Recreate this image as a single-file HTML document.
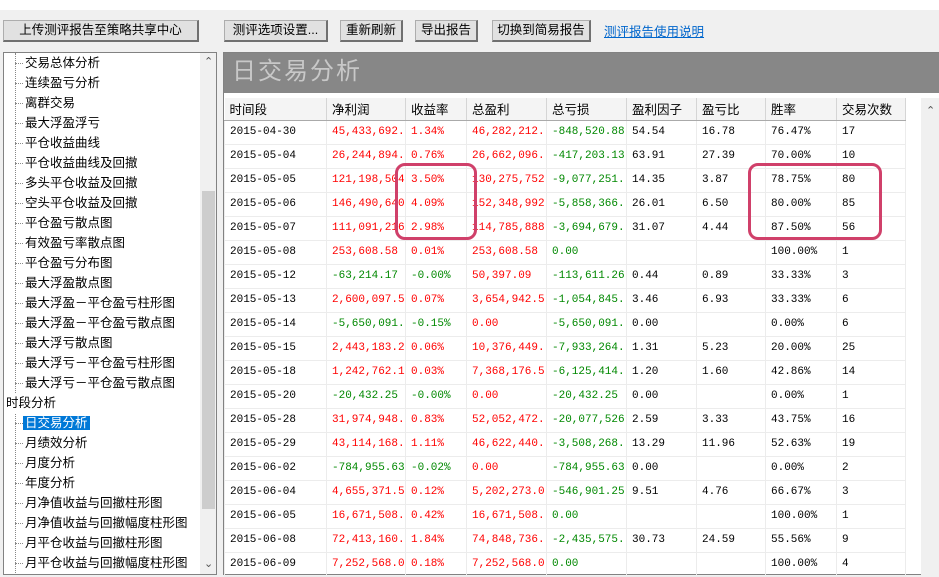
<!DOCTYPE html>
<html><head><meta charset="utf-8"><style>
*{margin:0;padding:0;box-sizing:border-box}
body{width:939px;height:575px;overflow:hidden;background:#f0f0f0;position:relative;font-family:"Liberation Sans","Noto Sans CJK SC",sans-serif;font-size:12px;color:#000}
.top{position:absolute;left:0;top:0;width:939px;height:10px;background:#fff}
.btn{position:absolute;top:20px;height:22px;background:#e1e1e1;border:1px solid #adadad;border-right:2px solid #707070;border-bottom:2px solid #707070;text-align:center;line-height:19px;font-size:12.5px}
.link{position:absolute;left:604px;top:21px;color:#0066cc;text-decoration:underline;font-size:12.5px}
.tree{position:absolute;left:3px;top:52px;width:214px;height:523px;background:#fff;border:1px solid #828282;overflow:hidden}
.ti{position:absolute;left:21px;height:20px;line-height:20px;font-size:12.5px;white-space:nowrap}
.ti:before{content:"";position:absolute;left:-10px;top:10px;width:8px;border-top:1px dotted #888}
.vl{position:absolute;left:11px;top:0;height:520px;border-left:1px dotted #888}
.sb{position:absolute;left:196px;top:0;width:17px;height:521px;background:#f0f0f0}
.thumb{position:absolute;left:198px;top:138px;width:13px;height:318px;background:#cdcdcd}
.sel{background:#0078d7;color:#fff;padding:0 2px;margin-left:-2px}
.right{position:absolute;left:223px;top:52px;width:716px;height:523px;background:#fff;border:1px solid #828282;border-right:none}
.title{position:absolute;left:0;top:0;width:716px;height:40px;background:#878787;color:#c8c8c8;font-size:24px;line-height:38px;padding-left:8px;letter-spacing:2px}
table{position:absolute;left:0;top:45px;width:681px;border-collapse:collapse;table-layout:fixed;font-family:"Liberation Mono","Noto Sans CJK SC",monospace;font-size:11px}
td{height:24px;border:1px solid #ececec;padding-left:5px;white-space:nowrap;overflow:hidden;line-height:22px}
th{height:22px;font-weight:normal;text-align:left;padding-left:5px;background:#f4f4f4;border-right:1px solid #d5d5d5;border-bottom:1px solid #aaa;font-family:"Liberation Sans","Noto Sans CJK SC",sans-serif;font-size:12.5px;overflow:hidden;white-space:nowrap}
.r{color:#f00}.g{color:#080}
.rsb{position:absolute;left:697px;top:45px;width:19px;height:478px;background:#f0f0f0}
.box{position:absolute;border:3px solid #d0406a;border-radius:10px}
</style></head><body>
<div class="top"></div>
<div class="btn" style="left:3px;width:196px">上传测评报告至策略共享中心</div>
<div class="btn" style="left:224px;width:104px">测评选项设置...</div>
<div class="btn" style="left:340px;width:63px">重新刷新</div>
<div class="btn" style="left:415px;width:63px">导出报告</div>
<div class="btn" style="left:492px;width:99px">切换到简易报告</div>
<div class="link">测评报告使用说明</div>

<div class="tree">
<div class="vl"></div>
<div class="ti" style="top:0">交易总体分析</div>
<div class="ti" style="top:20px">连续盈亏分析</div>
<div class="ti" style="top:40px">离群交易</div>
<div class="ti" style="top:60px">最大浮盈浮亏</div>
<div class="ti" style="top:80px">平仓收益曲线</div>
<div class="ti" style="top:100px">平仓收益曲线及回撤</div>
<div class="ti" style="top:120px">多头平仓收益及回撤</div>
<div class="ti" style="top:140px">空头平仓收益及回撤</div>
<div class="ti" style="top:160px">平仓盈亏散点图</div>
<div class="ti" style="top:180px">有效盈亏率散点图</div>
<div class="ti" style="top:200px">平仓盈亏分布图</div>
<div class="ti" style="top:220px">最大浮盈散点图</div>
<div class="ti" style="top:240px">最大浮盈－平仓盈亏柱形图</div>
<div class="ti" style="top:260px">最大浮盈－平仓盈亏散点图</div>
<div class="ti" style="top:280px">最大浮亏散点图</div>
<div class="ti" style="top:300px">最大浮亏－平仓盈亏柱形图</div>
<div class="ti" style="top:320px">最大浮亏－平仓盈亏散点图</div>
<div style="position:absolute;left:2px;top:340px;height:20px;line-height:20px;font-size:12.5px;background:#fff;width:60px">时段分析</div>
<div class="ti" style="top:360px"><span class="sel">日交易分析</span></div>
<div class="ti" style="top:380px">月绩效分析</div>
<div class="ti" style="top:400px">月度分析</div>
<div class="ti" style="top:420px">年度分析</div>
<div class="ti" style="top:440px">月净值收益与回撤柱形图</div>
<div class="ti" style="top:460px">月净值收益与回撤幅度柱形图</div>
<div class="ti" style="top:480px">月平仓收益与回撤柱形图</div>
<div class="ti" style="top:500px">月平仓收益与回撤幅度柱形图</div>
<div class="sb"></div><div class="thumb"></div>
<div style="position:absolute;left:200px;top:2px;font-size:11px;color:#555">&#8963;</div>
<div style="position:absolute;left:200px;top:504px;font-size:11px;color:#555">&#8964;</div>
</div>

<div class="right">
<div class="title">日交易分析</div>
<table>
<colgroup><col style="width:102px"><col style="width:79px"><col style="width:61px"><col style="width:80px"><col style="width:80px"><col style="width:70px"><col style="width:69px"><col style="width:71px"><col style="width:69px"></colgroup>
<tr><th>时间段</th><th>净利润</th><th>收益率</th><th>总盈利</th><th>总亏损</th><th>盈利因子</th><th>盈亏比</th><th>胜率</th><th>交易次数</th></tr>
<tr><td>2015-04-30</td><td class="r">45,433,692.</td><td class="r">1.34%</td><td class="r">46,282,212.</td><td class="g">-848,520.88</td><td>54.54</td><td>16.78</td><td>76.47%</td><td>17</td></tr>
<tr><td>2015-05-04</td><td class="r">26,244,894.</td><td class="r">0.76%</td><td class="r">26,662,096.</td><td class="g">-417,203.13</td><td>63.91</td><td>27.39</td><td>70.00%</td><td>10</td></tr>
<tr><td>2015-05-05</td><td class="r">121,198,504</td><td class="r">3.50%</td><td class="r">130,275,752</td><td class="g">-9,077,251.</td><td>14.35</td><td>3.87</td><td>78.75%</td><td>80</td></tr>
<tr><td>2015-05-06</td><td class="r">146,490,640</td><td class="r">4.09%</td><td class="r">152,348,992</td><td class="g">-5,858,366.</td><td>26.01</td><td>6.50</td><td>80.00%</td><td>85</td></tr>
<tr><td>2015-05-07</td><td class="r">111,091,216</td><td class="r">2.98%</td><td class="r">114,785,888</td><td class="g">-3,694,679.</td><td>31.07</td><td>4.44</td><td>87.50%</td><td>56</td></tr>
<tr><td>2015-05-08</td><td class="r">253,608.58</td><td class="r">0.01%</td><td class="r">253,608.58</td><td class="g">0.00</td><td></td><td></td><td>100.00%</td><td>1</td></tr>
<tr><td>2015-05-12</td><td class="g">-63,214.17</td><td class="g">-0.00%</td><td class="r">50,397.09</td><td class="g">-113,611.26</td><td>0.44</td><td>0.89</td><td>33.33%</td><td>3</td></tr>
<tr><td>2015-05-13</td><td class="r">2,600,097.5</td><td class="r">0.07%</td><td class="r">3,654,942.5</td><td class="g">-1,054,845.</td><td>3.46</td><td>6.93</td><td>33.33%</td><td>6</td></tr>
<tr><td>2015-05-14</td><td class="g">-5,650,091.</td><td class="g">-0.15%</td><td class="r">0.00</td><td class="g">-5,650,091.</td><td>0.00</td><td></td><td>0.00%</td><td>6</td></tr>
<tr><td>2015-05-15</td><td class="r">2,443,183.2</td><td class="r">0.06%</td><td class="r">10,376,449.</td><td class="g">-7,933,264.</td><td>1.31</td><td>5.23</td><td>20.00%</td><td>25</td></tr>
<tr><td>2015-05-18</td><td class="r">1,242,762.1</td><td class="r">0.03%</td><td class="r">7,368,176.5</td><td class="g">-6,125,414.</td><td>1.20</td><td>1.60</td><td>42.86%</td><td>14</td></tr>
<tr><td>2015-05-20</td><td class="g">-20,432.25</td><td class="g">-0.00%</td><td class="r">0.00</td><td class="g">-20,432.25</td><td>0.00</td><td></td><td>0.00%</td><td>1</td></tr>
<tr><td>2015-05-28</td><td class="r">31,974,948.</td><td class="r">0.83%</td><td class="r">52,052,472.</td><td class="g">-20,077,526</td><td>2.59</td><td>3.33</td><td>43.75%</td><td>16</td></tr>
<tr><td>2015-05-29</td><td class="r">43,114,168.</td><td class="r">1.11%</td><td class="r">46,622,440.</td><td class="g">-3,508,268.</td><td>13.29</td><td>11.96</td><td>52.63%</td><td>19</td></tr>
<tr><td>2015-06-02</td><td class="g">-784,955.63</td><td class="g">-0.02%</td><td class="r">0.00</td><td class="g">-784,955.63</td><td>0.00</td><td></td><td>0.00%</td><td>2</td></tr>
<tr><td>2015-06-04</td><td class="r">4,655,371.5</td><td class="r">0.12%</td><td class="r">5,202,273.0</td><td class="g">-546,901.25</td><td>9.51</td><td>4.76</td><td>66.67%</td><td>3</td></tr>
<tr><td>2015-06-05</td><td class="r">16,671,508.</td><td class="r">0.42%</td><td class="r">16,671,508.</td><td class="g">0.00</td><td></td><td></td><td>100.00%</td><td>1</td></tr>
<tr><td>2015-06-08</td><td class="r">72,413,160.</td><td class="r">1.84%</td><td class="r">74,848,736.</td><td class="g">-2,435,575.</td><td>30.73</td><td>24.59</td><td>55.56%</td><td>9</td></tr>
<tr><td>2015-06-09</td><td class="r">7,252,568.0</td><td class="r">0.18%</td><td class="r">7,252,568.0</td><td class="g">0.00</td><td></td><td></td><td>100.00%</td><td>4</td></tr>
</table>
<div class="rsb"><div style="position:absolute;left:5px;top:6px;font-size:11px;color:#555">&#8963;</div></div>
</div>
<div class="box" style="left:395px;top:163px;width:82px;height:77px"></div>
<div class="box" style="left:748px;top:163px;width:134px;height:77px"></div>
</body></html>
